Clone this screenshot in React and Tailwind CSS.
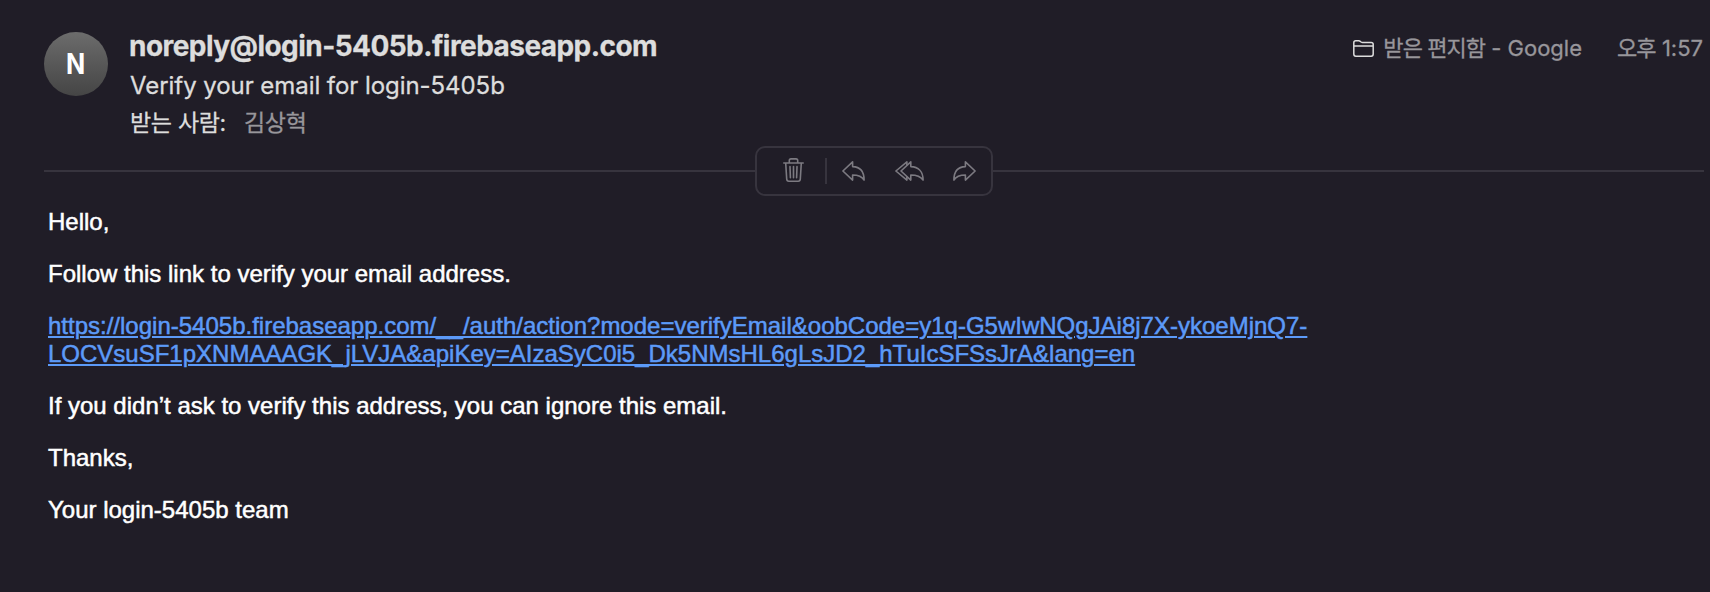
function TrashIcon() {
  return (
    <svg className="block h-6 w-[21px]" viewBox="0 0 21 24" fill="none" stroke="currentColor" strokeWidth="1.6" strokeLinecap="round" strokeLinejoin="round">
      <path d="M0.8 5H20.2M6.3 5V2.6Q6.3 0.9 8 0.9H13Q14.7 0.9 14.7 2.6V5M2.7 5L3.7 21Q3.8 23.2 5.8 23.2H15.2Q17.2 23.2 17.3 21L18.3 5M7 8.6L7.4 19.8M10.5 8.6V19.8M14 8.6L13.6 19.8" />
    </svg>
  );
}

function ReplyIcon({ flipped }) {
  return (
    <svg className={flipped ? "block h-5 w-[23px] -scale-x-100" : "block h-5 w-[23px]"} viewBox="0 0 23 20" fill="none" stroke="currentColor" strokeWidth="1.6" strokeLinejoin="round">
      <path d="M0.9 10L10.6 0.9V5.6C17.8 5.8 22.1 10.5 22.1 19.1C19.9 15.4 16.6 14 10.6 14V19.1Z" />
    </svg>
  );
}

function ReplyAllIcon() {
  return (
    <svg className="block h-5 w-[29px]" viewBox="0 0 29 20" fill="none" stroke="currentColor" strokeWidth="1.6" strokeLinejoin="round">
      <path d="M6 10L15.8 0.9V5.6C23.4 5.8 28.1 10.5 28.1 19.1C25.6 15.4 22.2 14 15.8 14V19.1Z" />
      <path d="M11.9 4.4V0.9L0.9 10L11.9 19.1V15.6" />
    </svg>
  );
}

function FolderIcon() {
  return (
    <svg className="block h-[17px] w-[21px]" viewBox="0 0 21 17" fill="none" stroke="currentColor" strokeWidth="1.5" strokeLinejoin="round">
      <path d="M0.8 14.1V2.8Q0.8 0.8 2.8 0.8H5.8Q6.6 0.8 7.3 1.4L8.1 2Q8.7 2.4 9.5 2.4H18.2Q20.2 2.4 20.2 4.4V14.1Q20.2 16.2 18.2 16.2H2.8Q0.8 16.2 0.8 14.1ZM0.8 5.9H20.2" />
    </svg>
  );
}

export default function App() {
  return (
    <div className="h-[592px] w-[1710px] overflow-hidden bg-[#201d27] font-['Inter','Noto_Sans_CJK_KR',sans-serif]">
      <header className="flex h-[146px] items-start pt-8 pr-[7px] pl-11">
        <div className="flex size-16 shrink-0 items-center justify-center rounded-full bg-linear-to-b from-[#6c6c6c] to-[#454545] text-white">
          <span className="scale-x-90 text-[28px] leading-8 font-bold">N</span>
        </div>
        <div className="ml-[21px] grow whitespace-nowrap text-[#dddddd]">
          <h1 className="-mt-1 h-9 text-[28px] leading-9 font-bold tracking-[-0.55px] [-webkit-text-stroke:0.3px]">noreply@login-5405b.firebaseapp.com</h1>
          <p className="mt-1 ml-px h-9 text-[24px] leading-9 tracking-[-0.06px] [-webkit-text-stroke:0.3px]">Verify your email for login-5405b</p>
          <p className="mt-px ml-px flex h-9 gap-[18px] text-[23px] leading-9 tracking-[-0.3px] [-webkit-text-stroke:0.3px]">
            <span>받는 사람:</span>
            <span className="text-[#98969b]">김상혁</span>
          </p>
        </div>
        <div className="flex h-8 items-center whitespace-nowrap text-[22px] leading-8 text-[#98969b] [-webkit-text-stroke:0.3px]">
          <span className="mt-px text-[#dddddd]">
            <FolderIcon />
          </span>
          <span className="ml-[9px]">
            <span className="tracking-[-0.95px]">받은 편지함</span> - Google
          </span>
          <span className="ml-[35px]">
            <span className="tracking-[-0.9px]">오후</span> 1:57
          </span>
        </div>
      </header>
      <div className="flex h-[50px] items-center pr-1.5 pl-11">
        <div className="h-0.5 w-[711px] bg-[#37343e]" />
        <div className="flex h-[50px] w-[238px] items-center rounded-[10px] border-2 border-[#37343e] text-[#7c7a81]">
          <span className="mb-0.5 ml-[26px]">
            <TrashIcon />
          </span>
          <span className="ml-[21px] h-[26px] w-0.5 bg-[#37343e]" />
          <span className="ml-[15px]">
            <ReplyIcon />
          </span>
          <span className="ml-[30px]">
            <ReplyAllIcon />
          </span>
          <span className="ml-[29px]">
            <ReplyIcon flipped />
          </span>
        </div>
        <div className="h-0.5 grow bg-[#37343e]" />
      </div>
      <main className="flex flex-col gap-6 pt-3 pl-12 font-['Liberation_Sans',Arial,sans-serif] text-[24px] leading-7 whitespace-nowrap text-white [-webkit-text-stroke:0.5px]">
        <p>Hello,</p>
        <p>Follow this link to verify your email address.</p>
        <p className="text-[#5c9af8] underline decoration-2 underline-offset-2">
          https://login-5405b.firebaseapp.com/__/auth/action?mode=verifyEmail&amp;oobCode=y1q-G5wIwNQgJAi8j7X-ykoeMjnQ7-
          <br />
          LOCVsuSF1pXNMAAAGK_jLVJA&amp;apiKey=AIzaSyC0i5_Dk5NMsHL6gLsJD2_hTuIcSFSsJrA&amp;lang=en
        </p>
        <p>If you didn’t ask to verify this address, you can ignore this email.</p>
        <p>Thanks,</p>
        <p>Your login-5405b team</p>
      </main>
    </div>
  );
}
